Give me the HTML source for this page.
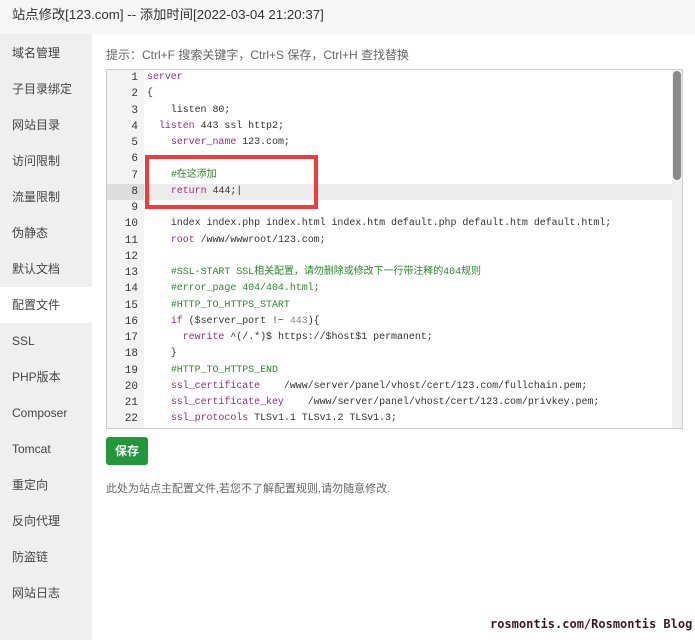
<!DOCTYPE html>
<html><head><meta charset="utf-8"><style>
*{margin:0;padding:0;box-sizing:border-box}
body{width:695px;height:640px;background:#fff;font-family:"Liberation Sans","Noto Sans CJK SC",sans-serif;position:relative;overflow:hidden;color:#333}
.title{position:absolute;left:0;top:0;width:695px;height:34px;background:#f6f6f6;font-size:13.3px;line-height:30px;padding-left:12px;color:#333}
.side{position:absolute;left:0;top:34px;width:92px;height:606px;background:#efefef}
.side div{position:absolute;left:0;width:92px;height:36px;line-height:36px;padding-left:12px;font-size:12px;color:#444}
.side .act{background:#fff}
.hint{position:absolute;left:106px;top:46px;font-size:12px;color:#666}
.ed{position:absolute;left:106px;top:69px;width:577px;height:360px;border:1px solid #ccc;background:#fff;overflow:hidden}
.gut{position:absolute;left:0;top:0;width:37px;height:100%;background:#f3f3f3}
.ln{position:absolute;left:0;width:37px;text-align:right;padding-right:6px;font:11px/16.25px "Liberation Mono",monospace;color:#333}
.cl{position:absolute;left:40px;font:10px/16.25px "Liberation Mono","Noto Sans CJK SC",monospace;color:#333;white-space:pre;letter-spacing:-0.05px}
.k{color:#9a2a82}.c{color:#2a8a2a}.g{color:#888}
.hl{position:absolute;left:37px;width:528px;height:16.25px;background:#ececec}
.sb{position:absolute;right:0;top:0;width:10px;height:100%;background:#f0f0f0}
.th{position:absolute;left:1px;top:1px;width:8px;height:109px;background:#8a8a8a;border-radius:4px}
.red{position:absolute;left:145px;top:155px;width:173px;height:54px;border:4px solid #f33a3a}
.btn{position:absolute;left:106px;top:437px;width:42px;height:28px;background:#24963b;border-radius:3px;color:#fff;font-size:12px;line-height:28px;text-align:center;font-weight:bold}
.note{position:absolute;left:106px;top:480px;font-size:11px;color:#666}
.wm{position:absolute;left:490px;top:617px;font:bold 12px "DejaVu Sans Mono",monospace;color:#3a1a22}
</style></head><body>
<div class="title">站点修改[123.com] -- 添加时间[2022-03-04 21:20:37]</div>
<div class="side">
<div style="top:1px">域名管理</div>
<div style="top:37px">子目录绑定</div>
<div style="top:73px">网站目录</div>
<div style="top:109px">访问限制</div>
<div style="top:145px">流量限制</div>
<div style="top:181px">伪静态</div>
<div style="top:217px">默认文档</div>
<div class="act" style="top:253px">配置文件</div>
<div style="top:289px">SSL</div>
<div style="top:325px">PHP版本</div>
<div style="top:361px">Composer</div>
<div style="top:397px">Tomcat</div>
<div style="top:433px">重定向</div>
<div style="top:469px">反向代理</div>
<div style="top:505px">防盗链</div>
<div style="top:541px">网站日志</div>
</div>
<div class="hint">提示：Ctrl+F 搜索关键字，Ctrl+S 保存，Ctrl+H 查找替换</div>
<div class="ed">
<div class="gut"></div>
<div style="position:absolute;left:0;top:113.75px;width:37px;height:16.25px;background:#ddd"></div>
<div class="hl" style="top:113.75px"></div>
<div class="ln" style="top:0">1<br>2<br>3<br>4<br>5<br>6<br>7<br>8<br>9<br>10<br>11<br>12<br>13<br>14<br>15<br>16<br>17<br>18<br>19<br>20<br>21<br>22</div>
<div class="cl" style="top:0"><span class="k">server</span>
{
    listen 80;
  <span class="k">listen</span> 443 ssl http2;
    <span class="k">server_name</span> 123.com;

    <span class="c">#在这添加</span>
    <span class="k">return</span> 444;|

    index index.php index.html index.htm default.php default.htm default.html;
    <span class="k">root</span> /www/wwwroot/123.com;

    <span class="c">#SSL-START SSL相关配置，请勿删除或修改下一行带注释的404规则</span>
    <span class="c">#error_page 404/404.html;</span>
    <span class="c">#HTTP_TO_HTTPS_START</span>
    <span class="k">if</span> ($server_port !~ <span class="g">443</span>){
      <span class="k">rewrite</span> ^(/.*)$ https://$host$1 permanent;
    }
    <span class="c">#HTTP_TO_HTTPS_END</span>
    <span class="k">ssl_certificate</span>    /www/server/panel/vhost/cert/123.com/fullchain.pem;
    <span class="k">ssl_certificate_key</span>    /www/server/panel/vhost/cert/123.com/privkey.pem;
    <span class="k">ssl_protocols</span> TLSv1.1 TLSv1.2 TLSv1.3;</div>
<div class="sb"><div class="th"></div></div>
</div>
<div class="red"></div>
<div class="btn">保存</div>
<div class="note">此处为站点主配置文件,若您不了解配置规则,请勿随意修改.</div>
<div class="wm">rosmontis.com/Rosmontis Blog</div>
</body></html>
